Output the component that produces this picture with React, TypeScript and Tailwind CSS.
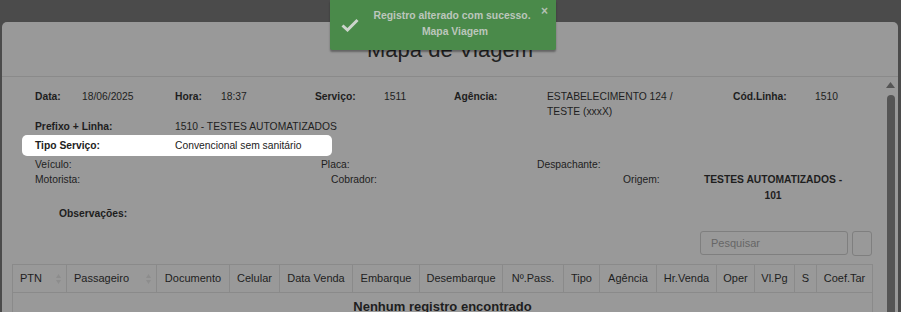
import React from 'react';

const columns = [
  { label: 'PTN', w: 'w-[54px]', sort: true },
  { label: 'Passageiro', w: 'w-[90px]', sort: true },
  { label: 'Documento', w: 'w-[73px]' },
  { label: 'Celular', w: 'w-[50px]' },
  { label: 'Data Venda', w: 'w-[73px]' },
  { label: 'Embarque', w: 'w-[67px]' },
  { label: 'Desembarque', w: 'w-[83px]' },
  { label: 'Nº.Pass.', w: 'w-[61px]' },
  { label: 'Tipo', w: 'w-[36px]' },
  { label: 'Agência', w: 'w-[57px]' },
  { label: 'Hr.Venda', w: 'w-[60px]' },
  { label: 'Oper', w: 'w-[38px]' },
  { label: 'Vl.Pg', w: 'w-[40px]' },
  { label: 'S', w: 'w-[22px]' },
  { label: 'Coef.Tar', w: 'w-[56px]' },
];

const SortIcon = () => (
  <svg width="5" height="10" viewBox="0 0 5 10" className="shrink-0">
    <path d="M2.5 0 L5 4 H0 Z" fill="#8d8d8d" />
    <path d="M2.5 10 L5 6 H0 Z" fill="#8d8d8d" />
  </svg>
);

export default function App() {
  return (
    <div className="relative w-[901px] h-[312px] overflow-hidden bg-[#4b4b4b] font-['Liberation_Sans',Arial,sans-serif]">
      <div className="pt-[22px] pl-[2px] pr-[3px]">
        <div className="bg-[#999999] rounded-t-[5px] h-[400px]">
          {/* header */}
          <div className="h-[55px] border-b border-[#8a8a8a] flex items-center justify-center">
            <h1 className="text-[22px] leading-none text-[#222222] pt-[2px]">Mapa de Viagem</h1>
          </div>

          <div className="flex">
            <div className="flex-1 pt-[12px] text-[10.3px] leading-[15px] text-[#1e1e1e]">
              <div className="pl-[33px]">
                <div className="flex">
                  <span className="w-[47px] font-bold">Data:</span>
                  <span className="w-[93px]">18/06/2025</span>
                  <span className="w-[46px] font-bold">Hora:</span>
                  <span className="w-[94px]">18:37</span>
                  <span className="w-[69px] font-bold">Serviço:</span>
                  <span className="w-[70px]">1511</span>
                  <span className="w-[93px] font-bold">Agência:</span>
                  <span className="w-[186px]">
                    <span className="block w-[140px]">ESTABELECIMENTO 124 / TESTE (xxxX)</span>
                  </span>
                  <span className="w-[82px] font-bold">Cód.Linha:</span>
                  <span>1510</span>
                </div>
                <div className="flex">
                  <span className="w-[140px] font-bold">Prefixo + Linha:</span>
                  <span>1510 - TESTES AUTOMATIZADOS</span>
                </div>
                <div className="flex items-center ml-[-13px] pl-[13px] mt-[1px] h-[21px] w-[310px] bg-white rounded-[5px] text-[#222222]">
                  <span className="w-[140px] font-bold">Tipo Serviço:</span>
                  <span>Convencional sem sanitário</span>
                </div>
                <div className="flex mt-[1px]">
                  <span className="w-[286px]">Veículo:</span>
                  <span className="w-[216px]">Placa:</span>
                  <span>Despachante:</span>
                </div>
                <div className="flex">
                  <span className="w-[296px]">Motorista:</span>
                  <span className="w-[292px]">Cobrador:</span>
                  <span className="w-[75px]">Origem:</span>
                  <span className="w-[150px] text-center font-bold leading-[16px]">TESTES AUTOMATIZADOS - 101</span>
                </div>
                <div className="pl-[24px] mt-[2px] font-bold">Observações:</div>
              </div>

              <div className="ml-[10px] w-[860px]">
                <div className="flex justify-end gap-[4px] mt-[10px]">
                  <div className="w-[148px] h-[24px] border border-[#7f7f7f] rounded-[3px] flex items-center pl-[10px] text-[11px] text-[#666666]">
                    Pesquisar
                  </div>
                  <div className="w-[20px] h-[25px] border border-[#7f7f7f] rounded-[3px]" />
                </div>

                <table className="mt-[8px] w-[860px] table-fixed border-collapse text-[11px] text-[#1e1e1e]">
                  <colgroup>
                    {columns.map((c) => (
                      <col key={c.label} className={c.w} />
                    ))}
                  </colgroup>
                  <thead>
                    <tr>
                      {columns.map((c) =>
                        c.sort ? (
                          <th key={c.label} className="h-[28px] border border-[#8a8a8a] font-normal pl-[7px] pr-[5px]">
                            <div className="flex items-center justify-between">
                              <span>{c.label}</span>
                              <SortIcon />
                            </div>
                          </th>
                        ) : (
                          <th key={c.label} className="h-[28px] border border-[#8a8a8a] font-normal text-center whitespace-nowrap">
                            {c.label}
                          </th>
                        )
                      )}
                    </tr>
                  </thead>
                  <tbody>
                    <tr>
                      <td colSpan={15} className="border border-[#8a8a8a] text-center font-bold text-[13px] leading-[16px] pt-[6px] pb-[8px]">
                        Nenhum registro encontrado
                      </td>
                    </tr>
                  </tbody>
                </table>
              </div>
            </div>

            {/* scrollbar */}
            <div className="w-[9px] mr-[3px] ml-[1px] flex flex-col items-center pt-[5px]">
              <svg width="9" height="6" viewBox="0 0 9 6">
                <path d="M4.5 0 L9 6 H0 Z" fill="#555555" />
              </svg>
              <div className="mt-[7px] w-[8px] h-[300px] bg-[#555555] rounded-t-[4px]" />
            </div>
          </div>
        </div>
      </div>

      {/* toast */}
      <div className="absolute left-[330px] top-0 w-[226px] h-[50px] bg-[#4a8a4a] shadow-[0_2px_2px_rgba(0,0,0,0.35)] rounded-b-[2px]">
        <svg className="absolute left-[11px] top-[18px]" width="18" height="14" viewBox="0 0 18 14">
          <path d="M1.5 7.5 L6.5 12 L16.5 2" stroke="#cdd5cd" strokeWidth="3" fill="none" />
        </svg>
        <div className="absolute left-[35px] top-[8px] w-[174px] text-center text-[10.4px] leading-[16px] font-bold text-[#bcc6bc]">
          <div>Registro alterado com sucesso.</div>
          <div className="pl-[6px]">Mapa Viagem</div>
        </div>
        <span className="absolute left-[211px] top-[5px] text-[12px] font-bold leading-none text-[#b3c0b3]">×</span>
      </div>
    </div>
  );
}
